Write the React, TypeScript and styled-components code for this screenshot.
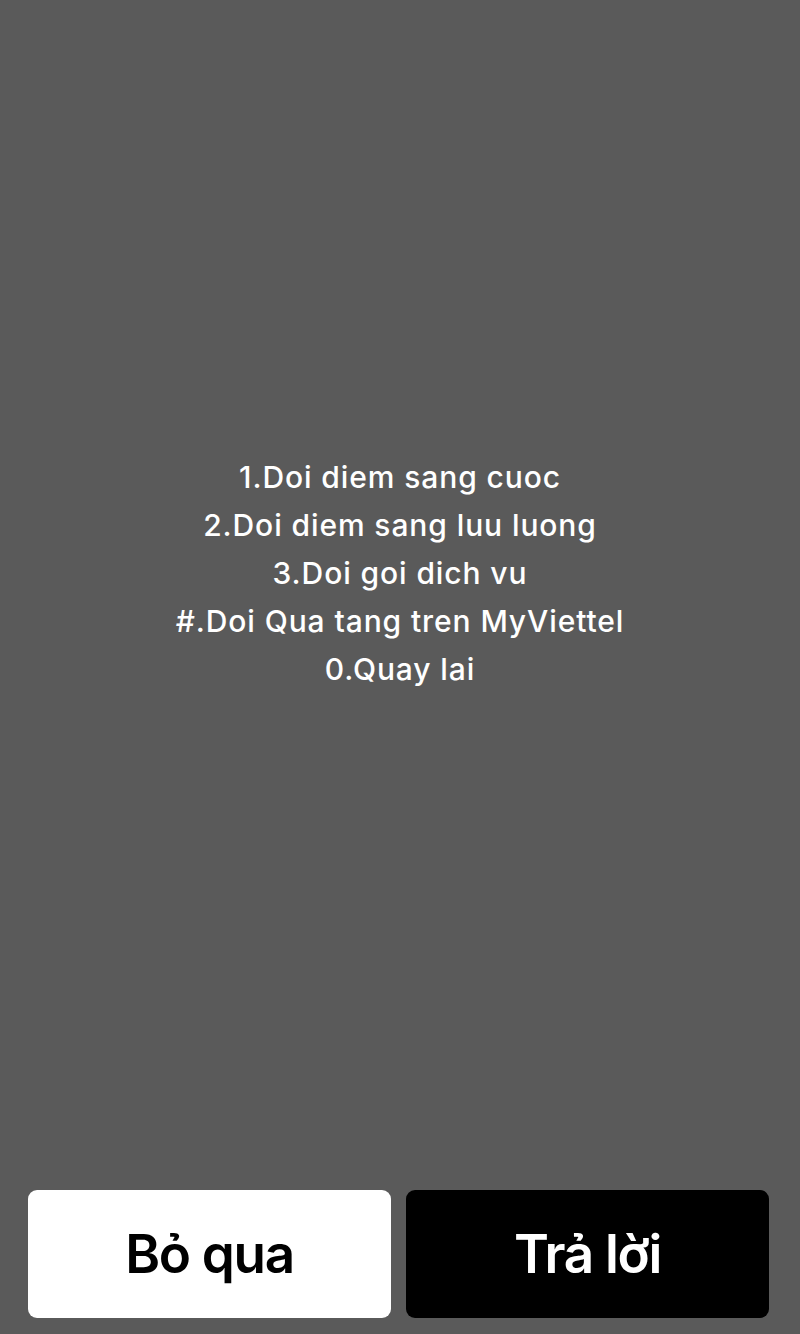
import React from "react";
import styled, { createGlobalStyle } from "styled-components";

const GlobalStyle = createGlobalStyle`
  html, body {
    margin: 0;
    padding: 0;
    background: #5a5a5a;
  }
`;

const Screen = styled.div`
  width: 800px;
  height: 1334px;
  box-sizing: border-box;
  background: #5a5a5a;
  display: flex;
  flex-direction: column;
  font-family: Inter, "Noto Sans", sans-serif;
`;

const MessageArea = styled.div`
  flex: 1;
  display: flex;
  flex-direction: column;
  align-items: center;
  padding-top: 453px;
`;

const MenuLine = styled.div`
  color: #ffffff;
  font-size: 30px;
  font-weight: 500;
  line-height: 48px;
  text-align: center;
  letter-spacing: 0.9px;
`;

const ActionBar = styled.div`
  display: grid;
  grid-template-columns: 1fr 1fr;
  gap: 15px;
  padding: 0 31px 16px 28px;
`;

const ActionButton = styled.button<{ $primary?: boolean }>`
  height: 128px;
  border: none;
  border-radius: 9px;
  background: ${(p) => (p.$primary ? "#000000" : "#ffffff")};
  color: ${(p) => (p.$primary ? "#ffffff" : "#000000")};
  font-family: Inter, "Noto Sans", sans-serif;
  font-size: 53px;
  font-weight: 600;
  letter-spacing: -1.3px;
  display: flex;
  align-items: center;
  justify-content: center;
  padding: 0;
`;

const menuItems = [
  "1.Doi diem sang cuoc",
  "2.Doi diem sang luu luong",
  "3.Doi goi dich vu",
  "#.Doi Qua tang tren MyViettel",
  "0.Quay lai",
];

export default function App() {
  return (
    <>
      <GlobalStyle />
      <Screen>
        <MessageArea>
          {menuItems.map((item) => (
            <MenuLine key={item}>{item}</MenuLine>
          ))}
        </MessageArea>
        <ActionBar>
          <ActionButton>Bỏ qua</ActionButton>
          <ActionButton $primary>Trả lời</ActionButton>
        </ActionBar>
      </Screen>
    </>
  );
}
